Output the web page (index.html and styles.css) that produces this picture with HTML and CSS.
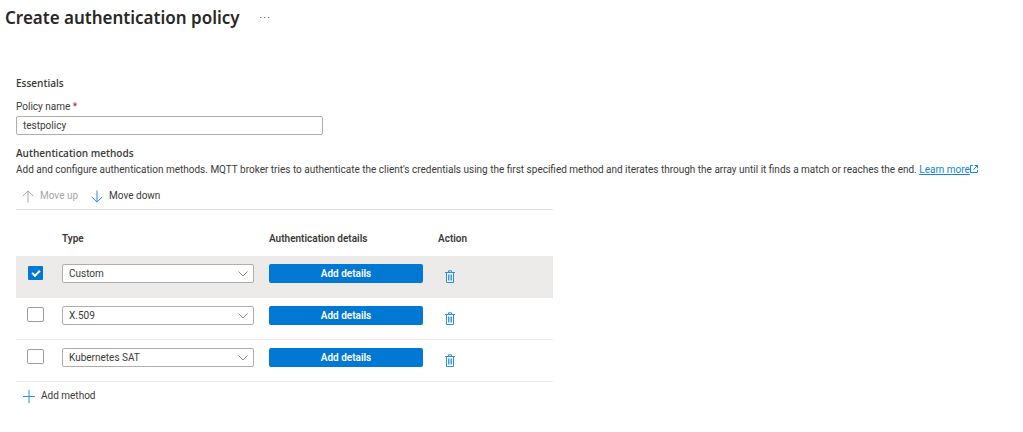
FILE: index.html
```html
<!DOCTYPE html>
<html lang="en">
<head>
<meta charset="utf-8">
<title>Create authentication policy</title>
<link rel="stylesheet" href="styles.css">
</head>
<body>
<svg class="sprite" aria-hidden="true">
  <symbol id="trash" viewBox="0 0 10 13"><path d="M2 3h6v9H2z" fill="#fff" fill-opacity=".5"/><path d="M0 2.5h10M3.5 2.5v-1.7h3v1.7M1.5 2.5v10h7v-10" fill="none" stroke="currentColor"/><path d="M3.5 4.5v6M5 4.5v6M6.5 4.5v6" fill="none" stroke="currentColor" stroke-width=".9"/></symbol>
  <symbol id="chevron" viewBox="0 0 10 6"><path d="M.5.5 5 5 9.5.5" fill="none" stroke="currentColor"/></symbol>
</svg>
<header class="page-header">
  <h1 class="page-title">Create authentication policy</h1>
  <button class="more" type="button" aria-label="More options"><svg width="10" height="2" viewBox="0 0 10 2"><path d="M0 .5h1.4M4 .5h1.4M8 .5h1.4" stroke="currentColor"/></svg></button>
</header>
<main class="content">
  <section class="essentials">
    <h2 class="section-title">Essentials</h2>
    <label class="field-label" for="policy-name">Policy name <span class="required">*</span></label>
    <input class="text-box" id="policy-name" type="text" value="testpolicy" required>
  </section>
  <section class="methods">
    <h2 class="section-title">Authentication methods</h2>
    <p class="description">Add and configure authentication methods. MQTT broker tries to authenticate the client's credentials using the first specified method and iterates through the array until it finds a match or reaches the end. <a class="learn-more" href="#learn-more">Learn more<svg class="external" width="8" height="8" viewBox="0 0 8 8" aria-hidden="true"><path d="M3 .5H.5v7h7V5M4.5.5h3v3M7.3.7 3.5 4.5" fill="none" stroke="currentColor"/></svg></a></p>
    <div class="toolbar">
      <button class="command" type="button" disabled><svg width="12" height="13" viewBox="0 0 12 13" aria-hidden="true"><path d="M6 12.5V1M.7 6.2 6 .9l5.3 5.3" fill="none" stroke="currentColor"/></svg>Move up</button>
      <button class="command" type="button"><svg class="blue" width="12" height="13" viewBox="0 0 12 13" aria-hidden="true"><path d="M6 .5V12M.7 6.8 6 12.1l5.3-5.3" fill="none" stroke="currentColor"/></svg>Move down</button>
    </div>
    <table class="method-table">
      <thead>
        <tr><th class="col-check"></th><th class="col-type">Type</th><th class="col-details">Authentication details</th><th class="col-action">Action</th></tr>
      </thead>
      <tbody>
        <tr class="selected">
          <td class="col-check"><input class="check" type="checkbox" aria-label="Select Custom" checked></td>
          <td><div class="dropdown"><select class="select" aria-label="Type"><option>Custom</option></select><svg class="chevron"><use href="#chevron"/></svg></div></td>
          <td><button class="primary" type="button">Add details</button></td>
          <td><button class="delete" type="button" aria-label="Delete Custom"><svg width="10" height="13"><use href="#trash"/></svg></button></td>
        </tr>
        <tr>
          <td class="col-check"><input class="check" type="checkbox" aria-label="Select X.509"></td>
          <td><div class="dropdown"><select class="select" aria-label="Type"><option>X.509</option></select><svg class="chevron"><use href="#chevron"/></svg></div></td>
          <td><button class="primary" type="button">Add details</button></td>
          <td><button class="delete" type="button" aria-label="Delete X.509"><svg width="10" height="13"><use href="#trash"/></svg></button></td>
        </tr>
        <tr>
          <td class="col-check"><input class="check" type="checkbox" aria-label="Select Kubernetes SAT"></td>
          <td><div class="dropdown"><select class="select" aria-label="Type"><option>Kubernetes SAT</option></select><svg class="chevron"><use href="#chevron"/></svg></div></td>
          <td><button class="primary" type="button">Add details</button></td>
          <td><button class="delete" type="button" aria-label="Delete Kubernetes SAT"><svg width="10" height="13"><use href="#trash"/></svg></button></td>
        </tr>
      </tbody>
    </table>
    <button class="command add" type="button"><svg class="blue" width="12" height="13" viewBox="0 0 12 13" aria-hidden="true"><path d="M6 0v13M0 6.5h12" stroke="currentColor"/></svg>Add method</button>
  </section>
</main>
</body>
</html>
```
FILE: styles.css
```css
* { box-sizing: border-box; }
body {
  margin: 0;
  background: #fff;
  color: #3b3a39;
  font: 10px/16px Roboto, "Open Sans", sans-serif;
}
button, input, select { font: inherit; color: inherit; margin: 0; }
button { border: 0; background: none; padding: 0; cursor: pointer; }
svg { display: block; }
.sprite { display: none; }

.page-header {
  display: flex;
  align-items: center;
  gap: 20px;
  padding: 6px 5px 0;
}
.page-title {
  margin: 0;
  font: 600 17px/24px "Noto Sans", "Open Sans", sans-serif;
  color: #292827;
}
.more { color: #777; }

.content { padding: 45px 16px 16px; }
.section-title { margin: 0; font: 600 10px/16px "Open Sans", "Noto Sans", sans-serif; }
.field-label { display: block; margin-top: 8px; }
.required { color: #a4262c; }
.text-box {
  display: block;
  width: 100%;
  max-width: 307px;
  height: 19px;
  margin-top: 1px;
  padding: 0 6px;
  border: 1px solid #b0aeac;
  border-radius: 2px;
}
.methods { margin-top: 10px; }
.description { margin: 1px 0 0; }
.learn-more { color: #1683d8; }
.external { display: inline-block; vertical-align: baseline; }

.toolbar {
  display: flex;
  gap: 13px;
  max-width: 537px;
  margin-top: 6px;
  padding: 4px 6px 5px;
  border-bottom: 1px solid #dddcdb;
}
.command { display: flex; align-items: center; gap: 6px; }
.command:disabled { color: #a8a6a4; }
.blue { color: #2b8fdd; }
.add { margin: 6px 0 0 7px; }

.method-table {
  width: 100%;
  max-width: 537px;
  margin-top: 20px;
  border-collapse: separate;
  border-spacing: 0;
  table-layout: fixed;
}
th { height: 26px; padding: 0 0 8px; text-align: left; font-weight: 600; }
td { height: 42px; padding: 8px 15px 0 0; vertical-align: top; border-bottom: 1px solid #edebe9; }
.selected { background: #edebe9; }
.col-check { width: 46px; padding-left: 11px; }
.col-type { width: 207px; }
.col-details { width: 169px; }
.check {
  appearance: none;
  display: grid;
  place-content: center;
  width: 17px;
  height: 15px;
  margin-top: 1px;
  border: 1px solid #a09e9c;
  border-radius: 2px;
  background: #fff;
}
.check:checked {
  width: 15px;
  height: 14px;
  margin: 2px 0 0 1px;
  border: 0;
  border-radius: 1px;
  background: #0078d4;
}
.check:checked::before {
  content: "";
  width: 6px;
  height: 3px;
  margin-bottom: 2px;
  border: solid #fff;
  border-width: 0 0 2px 2px;
  transform: rotate(-45deg);
}
.dropdown { position: relative; }
.select {
  appearance: none;
  display: block;
  width: 100%;
  height: 19px;
  padding: 0 24px 0 6px;
  border: 1px solid #b0aeac;
  border-radius: 2px;
  background: #fff;
}
.chevron {
  position: absolute;
  top: 7px;
  right: 6px;
  width: 10px;
  height: 6px;
  color: #888;
  pointer-events: none;
}
.primary {
  display: block;
  width: 100%;
  height: 19px;
  border-radius: 2px;
  background: #0078d4;
  color: #fff;
  font-weight: 600;
}
.delete { display: block; margin: 6px 0 0 7px; color: #2b8fdd; }
```
